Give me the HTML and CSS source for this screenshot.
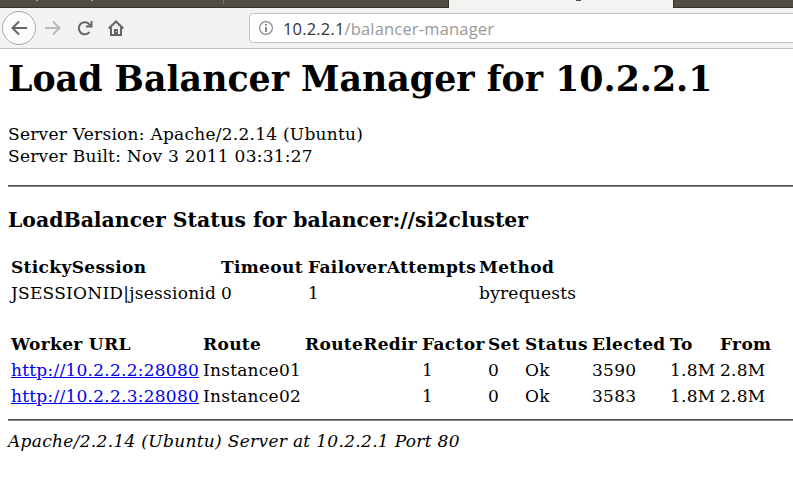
FILE: index.html
```html
<!DOCTYPE html>
<html lang="en">
<head>
<meta charset="utf-8">
<title>Balancer Manager</title>
<link rel="stylesheet" href="styles.css">
</head>
<body>
<div class="tabs"><div class="tab-a"></div><div class="tab-active"></div><div class="tab-rest"></div></div>
<nav class="toolbar">
<span class="back"><svg width="18" height="18" viewBox="0 0 18 18"><path d="M17 9H3M9 2.500L2.500 9 9 15.500"/></svg></span>
<svg class="forward" width="18" height="18" viewBox="0 0 18 18"><path d="M1 9h14M9 2.500L15.500 9 9 15.500"/></svg>
<svg class="reload" width="16" height="16" viewBox="0 0 16 16"><path d="M12.500 12A6 6 0 1 1 12.500 4.500L14 6"/><path class="fill" d="M15.500 1v6.500H9V5.500h4.500V1z"/></svg>
<svg class="home" width="16" height="16" viewBox="0 0 16 16"><path d="M.8 8.500L8 1.500l7.200 7M3 7.500V15h10V7.500"/><path class="fill" d="M6 9h4v6H6z"/><path class="dot" d="M8 11h1v1H8z"/></svg>
<div class="url"><svg width="14" height="14" viewBox="0 0 14 14"><circle cx="7" cy="7" r="6.400"/><path class="i" d="M7 6v5M7 3v1.800"/></svg><span>10.2.2.1<span class="path">/balancer-manager</span></span></div>
</nav>
<main>
<h1>Load Balancer Manager for 10.2.2.1</h1>
<div class="info">Server Version: Apache/2.2.14 (Ubuntu)<br>Server Built: Nov 3 2011 03:31:27</div>
<hr>
<h3>LoadBalancer Status for balancer://si2cluster</h3>
<table class="session">
<colgroup><col class="s1"><col class="s2"><col class="s3"><col class="s4"></colgroup>
<tr><th>StickySession</th><th>Timeout</th><th>FailoverAttempts</th><th>Method</th></tr>
<tr><td>JSESSIONID|jsessionid</td><td>0</td><td>1</td><td>byrequests</td></tr>
</table>
<table class="workers">
<colgroup><col class="w1"><col class="w2"><col class="w3"><col class="w4"><col class="w5"><col class="w6"><col class="w7"><col class="w8"><col class="w9"></colgroup>
<tr><th>Worker URL</th><th>Route</th><th>RouteRedir</th><th>Factor</th><th>Set</th><th>Status</th><th>Elected</th><th>To</th><th>From</th></tr>
<tr><td><a href="#">http://10.2.2.2:28080</a></td><td>Instance01</td><td></td><td>1</td><td>0</td><td>Ok</td><td>3590</td><td>1.8M</td><td>2.8M</td></tr>
<tr><td><a href="#">http://10.2.2.3:28080</a></td><td>Instance02</td><td></td><td>1</td><td>0</td><td>Ok</td><td>3583</td><td>1.8M</td><td>2.8M</td></tr>
</table>
<hr class="last">
<address>Apache/2.2.14 (Ubuntu) Server at 10.2.2.1 Port 80</address>
</main>
</body>
</html>
```
FILE: styles.css
```css
* { box-sizing: border-box; }
body { margin: 0; height: 495px; overflow: hidden; background: #fff; color: #000; font: 17px/22px "DejaVu Serif", serif; letter-spacing: .25px; }
.tabs { height: 8px; display: flex; background: #f4f3f1; }
.tab-a { width: 449px; background: linear-gradient(90deg, transparent 36px, #aaa9a2 36px, #aaa9a2 38px, transparent 38px, transparent 91px, #aaa9a2 91px, #aaa9a2 93px, transparent 93px) 0 0 / 100% 1px no-repeat, linear-gradient(90deg, transparent 223px, #77756e 223px, #77756e 224px, transparent 224px) 0 0 / 100% 4px no-repeat #504d45; border-bottom: 1px solid #35332e; border-right: 1px solid #35332e; }
.tab-active { width: 224px; background: linear-gradient(#55545a, #55545a) 127px 0 / 5px 1px no-repeat; }
.tab-rest { flex: 1; background: #504d45; border-bottom: 1px solid #35332e; border-left: 1px solid #35332e; }
.toolbar { height: 41px; display: flex; align-items: center; background: #f3f2f0; border-bottom: 1px solid #c4c0bb; }
svg { fill: none; stroke: #666563; stroke-width: 2; flex: none; }
.back { width: 34px; height: 34px; flex: none; margin-left: 2px; border: 1px solid #aaa9a7; border-radius: 50%; background: #fcfcfc; display: flex; align-items: center; justify-content: center; }
.forward { margin-left: 8px; stroke: #b9b8b6; }
.reload { margin-left: 15px; }
.fill { fill: #666563; stroke: none; }
.dot { fill: #f3f2f0; stroke: none; }
.home { margin-left: 15px; }
.url { margin-left: 125px; width: 560px; height: 30px; flex: none; display: flex; align-items: center; gap: 10px; padding-left: 9px; background: #fff; border: 1px solid #c4c0bb; border-radius: 4px; font: 16.500px "Open Sans", sans-serif; letter-spacing: .17px; color: #333; }
.url svg { stroke: #888; stroke-width: 1.200; }
.url .i { stroke-width: 2; }
.path { color: #999; }
main { padding-left: 8px; white-space: nowrap; }
h1 { margin: 9px 0 0; font-size: 34.750px; line-height: 42px; letter-spacing: 0; }
.info { margin-top: 23px; }
hr { margin: 18px 0 0; border: 0; border-top: 1px solid #4c4c4c; border-bottom: 1px solid #858585; height: 2px; }
h3 { margin: 21px 0 0; font-size: 20.400px; line-height: 24px; letter-spacing: 0; }
table { table-layout: fixed; border-spacing: 2px; border-collapse: separate; }
th, td { padding: 1px; text-align: left; height: 24px; line-height: 22px; }
th { letter-spacing: .34px; }
.session { margin-top: 21px; width: 570px; }
.workers { margin-top: 23px; width: 766px; }
.s1 { width: 208px; }
.s2 { width: 85px; }
.s3 { width: 169px; }
.w1 { width: 190px; }
.w2 { width: 100px; }
.w3 { width: 115px; }
.w4 { width: 64px; }
.w5 { width: 35px; }
.w6 { width: 65px; }
.w7 { width: 76px; }
.w8 { width: 48px; }
.last { margin-top: 9px; }
address { margin-top: 9px; letter-spacing: .31px; }
```
